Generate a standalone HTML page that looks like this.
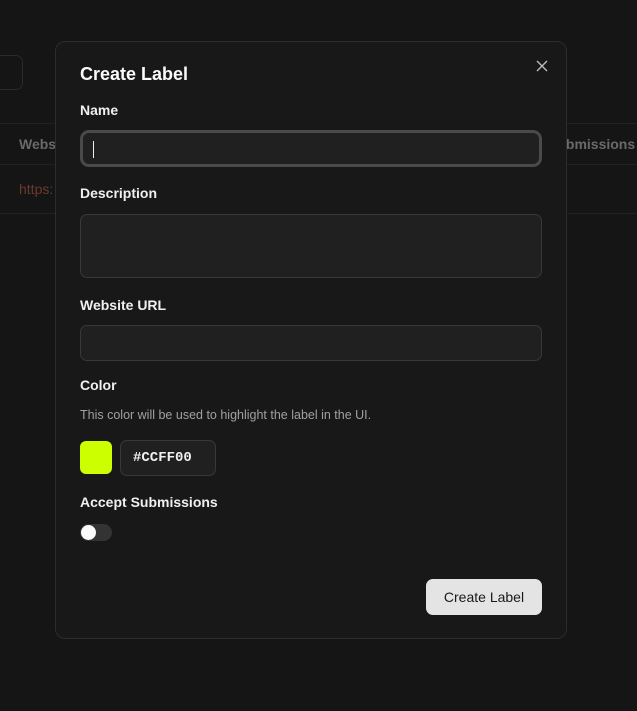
<!DOCTYPE html>
<html><head><style>
*{box-sizing:border-box;margin:0;padding:0}
body{width:637px;height:711px;background:#151515;font-family:"Liberation Sans",sans-serif;position:relative;overflow:hidden;color:#f2f2f2}
.abs{position:absolute}
.modal{position:absolute;left:55px;top:41px;width:512px;height:598px;background:#181818;border:1px solid #2c2c2c;border-radius:10px}
.lbl{position:absolute;left:24px;font-size:14px;font-weight:bold;color:#f0f0f0}
.inp{position:absolute;left:24px;width:462px;background:#202020;border:1px solid #383838;border-radius:7px}
</style></head><body>
<div class="abs" style="left:-10px;top:55px;width:33px;height:35px;border:1px solid #2a2a2a;border-radius:7px"></div>
<div class="abs" style="left:0;top:123px;width:637px;height:1px;background:#222"></div>
<div class="abs" style="left:0;top:164px;width:637px;height:1px;background:#222"></div>
<div class="abs" style="left:0;top:213px;width:637px;height:1px;background:#222"></div>
<div class="abs" style="left:19px;top:136px;font-size:14px;color:#6a6a6a;font-weight:bold">Websi</div>
<div class="abs" style="left:548px;top:136px;font-size:14px;color:#6a6a6a;font-weight:bold">Submissions</div>
<div class="abs" style="left:19px;top:181px;font-size:14px;color:#6b3a2a">https:</div>
<div class="modal">
 <div class="abs" style="left:24px;top:22px;font-size:18px;font-weight:bold;color:#fafafa">Create Label</div>
 <svg class="abs" style="left:480px;top:18px" width="12" height="12" viewBox="0 0 12 12"><path d="M1 1L11 11M11 1L1 11" stroke="#bbb" stroke-width="1.4"/></svg>
 <div class="lbl" style="top:60px">Name</div>
 <div class="inp" style="top:88px;height:37px;border:3px solid #4a4a4a;border-radius:9px"><div class="abs" style="left:10px;top:8px;width:1px;height:17px;background:#eee"></div></div>
 <div class="lbl" style="top:143px">Description</div>
 <div class="inp" style="top:172px;height:64px"></div>
 <div class="lbl" style="top:255px">Website URL</div>
 <div class="inp" style="top:283px;height:36px"></div>
 <div class="lbl" style="top:335px">Color</div>
 <div class="abs" style="left:24px;top:366px;font-size:12.5px;color:#a0a0a0">This color will be used to highlight the label in the UI.</div>
 <div class="abs" style="left:24px;top:399px;width:32px;height:33px;background:#ccff00;border-radius:6px"></div>
 <div class="abs" style="left:64px;top:398px;width:96px;height:36px;background:#202020;border:1px solid #383838;border-radius:7px;font-family:'Liberation Mono',monospace;font-size:14px;font-weight:bold;padding:9px 12px;color:#f0f0f0">#CCFF00</div>
 <div class="lbl" style="top:452px">Accept Submissions</div>
 <div class="abs" style="left:24px;top:482px;width:32px;height:17px;background:#333;border-radius:9px"><div class="abs" style="left:1px;top:1px;width:15px;height:15px;border-radius:50%;background:#fafafa"></div></div>
 <div class="abs" style="left:370px;top:537px;width:116px;height:36px;background:#e4e4e4;border-radius:7px;color:#1a1a1a;font-size:14px;text-align:center;line-height:36px">Create Label</div>
</div>
</body></html>
